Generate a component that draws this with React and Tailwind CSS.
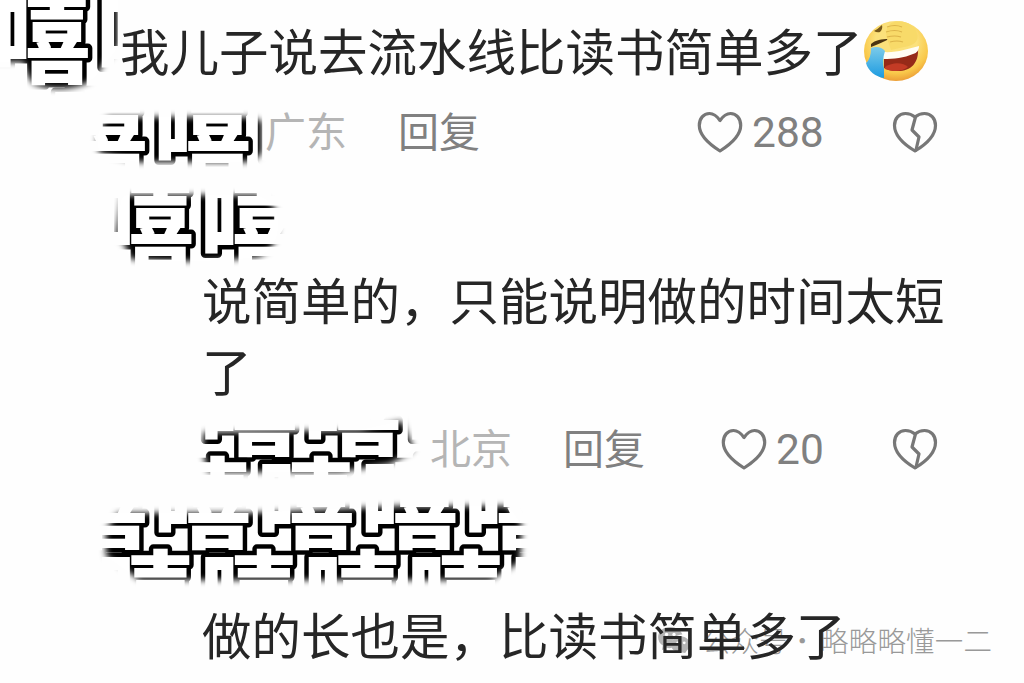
import React from 'react';

// start = x of the first glyph, rows are staggered like bricks
const GLYPH_ROWS = [
  { start: -7.5, y: 75, text: '嘻嘻' },
  { start: 49.5, y: 168, text: '嘻嘻嘻' },
  { start: 96, y: 261, text: '嘻嘻' },
  { start: 199.5, y: 447, text: '嘻嘻嘻' },
  { start: 49.5, y: 540, text: '嘻嘻嘻嘻嘻' },
  { start: 96, y: 633, text: '嘻嘻嘻嘻嘻' },
];

const Scribbles = () => (
  <svg className="absolute inset-0 pointer-events-none" width="1024" height="683" viewBox="0 0 1024 683">
    <defs>
      <filter id="soft" x="-20%" y="-40%" width="140%" height="180%">
        <feGaussianBlur stdDeviation="3" />
      </filter>
      <mask id="brush" maskUnits="userSpaceOnUse" x="0" y="0" width="1024" height="683">
        <g fill="white" filter="url(#soft)">
          <path d="M-10 -10 H118 V46 Q112 58 104 62 Q96 82 78 86 Q55 92 34 84 Q26 76 24 62 H-10 Z" />
          <path d="M108 117 H244 Q256 117 262 122 V152 Q258 160 245 162 H136 L100 153 Q92 136 108 117 Z" />
          <path d="M122 195 H258 Q280 205 278 225 Q278 248 258 257 Q200 264 130 259 Q125 240 116 236 Z" />
          <path d="M204 432 L360 430 L402 421 L414 450 L390 464 L340 472 L208 472 L202 448 Z" />
          <path d="M118 513 H250 L400 506 H508 L522 525 L520 562 L490 580 H140 L106 556 L106 530 Z" />
        </g>
      </mask>
    </defs>
    <g mask="url(#brush)">
      <rect width="1024" height="683" fill="white" />
      {GLYPH_ROWS.map((row) => (
        <text
          key={row.y}
          x={row.start}
          y={row.y}
          fontFamily='"Noto Sans CJK SC", sans-serif'
          fontWeight="900"
          fontSize="98"
          letterSpacing="5.5"
          fill="white"
          stroke="black"
          strokeWidth="9"
          strokeLinejoin="round"
          paintOrder="stroke"
        >
          {row.text}
        </text>
      ))}
    </g>
  </svg>
);

const Heart = () => (
  <svg width="46" height="44" viewBox="0 0 46 44" fill="none" stroke="#777" strokeWidth="3.2" strokeLinejoin="round" strokeLinecap="round">
    <path d="M23 10.5C19.5 5.5 16.5 3.5 12.5 3.5C6.5 3.5 2.3 8.5 2.3 15.5C2.3 26 12 34 23 41C34 34 43.7 26 43.7 15.5C43.7 8.5 39.5 3.5 33.5 3.5C29.5 3.5 26.5 5.5 23 10.5Z" />
  </svg>
);

const BrokenHeart = () => (
  <svg width="46" height="44" viewBox="0 0 46 44" fill="none" stroke="#777" strokeWidth="3.2" strokeLinejoin="round" strokeLinecap="round">
    <path d="M23 7C20 4.5 17 3.5 13.5 3.5C7 3.5 2.5 8.5 2.5 15.5C2.5 27 13 35 23 41C33 35 43.5 27 43.5 15.5C43.5 8.5 39 3.5 32.5 3.5C29 3.5 26 4.5 23 7Z" />
    <path d="M23.5 7L20 20L27 27L24 40" />
  </svg>
);

const LaughEmoji = () => (
  <svg width="68" height="64" viewBox="0 0 68 64">
    <defs>
      <radialGradient id="face" cx="0.5" cy="0.35" r="0.65">
        <stop offset="0.5" stopColor="#fbe17b" />
        <stop offset="0.8" stopColor="#f9c84a" />
        <stop offset="1" stopColor="#ec9f38" />
      </radialGradient>
      <linearGradient id="tear" x1="0" y1="0" x2="0" y2="1">
        <stop offset="0" stopColor="#7ccbea" />
        <stop offset="1" stopColor="#1c9be0" />
      </linearGradient>
    </defs>
    <ellipse cx="34" cy="32" rx="32" ry="30" fill="url(#face)" />
    <path d="M22 36C34 37 47 32 56 29C57 44 49 52 36 52C30 52 25 51 22 49Z" fill="#962a18" />
    <path d="M23 48C32 42 42 44 46 48C40 53 30 53 23 50Z" fill="#c33b25" />
    <path d="M21 33C34 34 46 30 57 27C57 31 55 34 51 35C42 39 32 40 21 40Z" fill="#fffdf5" />
    <path d="M9 25C13 21 20 20 27 20C22 23 16 25 9 28Z" fill="#4c3511" />
    <path d="M12 12Q16 10 20 6Q21 10 18 13Q15 14 12 12Z" fill="#76581b" />
    <path d="M27 25C22 15 24 5 32 3C42 0 53 6 55 14C58 22 51 27 42 28L29 31Z" fill="#f8da69" />
    <path d="M25 8Q33 5 40 8M24 13Q33 10 40 13M25 18Q33 16 39 18M28 23Q35 21 41 23" fill="none" stroke="#dcb349" strokeWidth="1.1" />
    <path d="M9 29C14 27 20 28 23 32Q20 41 22 50V59C14 58 6 52 4 44Q9 40 9 29Z" fill="url(#tear)" />
  </svg>
);

const Meta = ({ place, likes, placeClass, replyClass }) => (
  <div className="flex items-center h-[60px] text-[41px] leading-[52px] text-[#808080]">
    <span className={`shrink-0 pb-[6px] text-[#b5b5b5] ${placeClass}`}>{place}</span>
    <span className={`shrink-0 pb-[6px] ${replyClass}`}>回复</span>
    <Heart />
    <span className="ml-[9px] pt-[2px] font-[Roboto] text-[42.5px]">{likes}</span>
    <div className="ml-auto mr-[86px]">
      <BrokenHeart />
    </div>
  </div>
);

const Watermark = () => (
  <div className="absolute left-[658px] top-[620px] flex items-center h-[40px] text-[28.5px] font-light text-[#999]">
    <svg className="mr-[12px]" width="32" height="28" viewBox="0 0 34 30">
      <path d="M13 1C5 1 0 6 0 12C0 16 2 19 5 21L4 26L9 23C11 24 13 24 15 23C13 15 19 9 26 9C24 4 19 1 13 1Z" fill="#b4b4b4" />
      <path d="M24 11C18 11 14 15 14 20C14 25 18 28 24 28L29 29L31 26C33 24 34 22 34 20C34 15 30 11 24 11Z" fill="#b4b4b4" />
      <g fill="#fff">
        <circle cx="9" cy="9" r="1.8" />
        <circle cx="17" cy="9" r="1.8" />
        <circle cx="21" cy="18" r="1.5" />
        <circle cx="28" cy="18" r="1.5" />
      </g>
    </svg>
    <span className="w-[86px]">公众号</span>
    <span className="w-[32px]">·</span>
    <span className="tracking-[0.2px]">略略略懂一二</span>
  </div>
);

export default function App() {
  return (
    <div className="relative w-[1024px] h-[683px] bg-[#fefefe] overflow-hidden font-['Noto_Sans_CJK_SC',sans-serif] text-[49.5px] text-[#262626] whitespace-nowrap">
      <Watermark />
      <div className="relative flex flex-col">
        <div className="flex items-center h-[102px] pl-[120px]">
          <p className="w-[742px] pb-[3px] leading-[70px]">我儿子说去流水线比读书简单多了</p>
          <LaughEmoji />
        </div>
        <Meta place="广东" likes="288" placeClass="ml-[265px] w-[133px]" replyClass="w-[299px]" />
        <div className="h-[101px]" />
        <p className="pl-[202px] leading-[71px]">
          说简单的，只能说明做的时间太短
          <br />
          了
        </p>
        <div className="h-[14px]" />
        <Meta place="北京" likes="20" placeClass="ml-[430px] w-[133px]" replyClass="w-[158px]" />
        <div className="h-[118px]" />
        <p className="pl-[202px] leading-[74px]">做的长也是，比读书简单多了</p>
      </div>
      <Scribbles />
    </div>
  );
}
